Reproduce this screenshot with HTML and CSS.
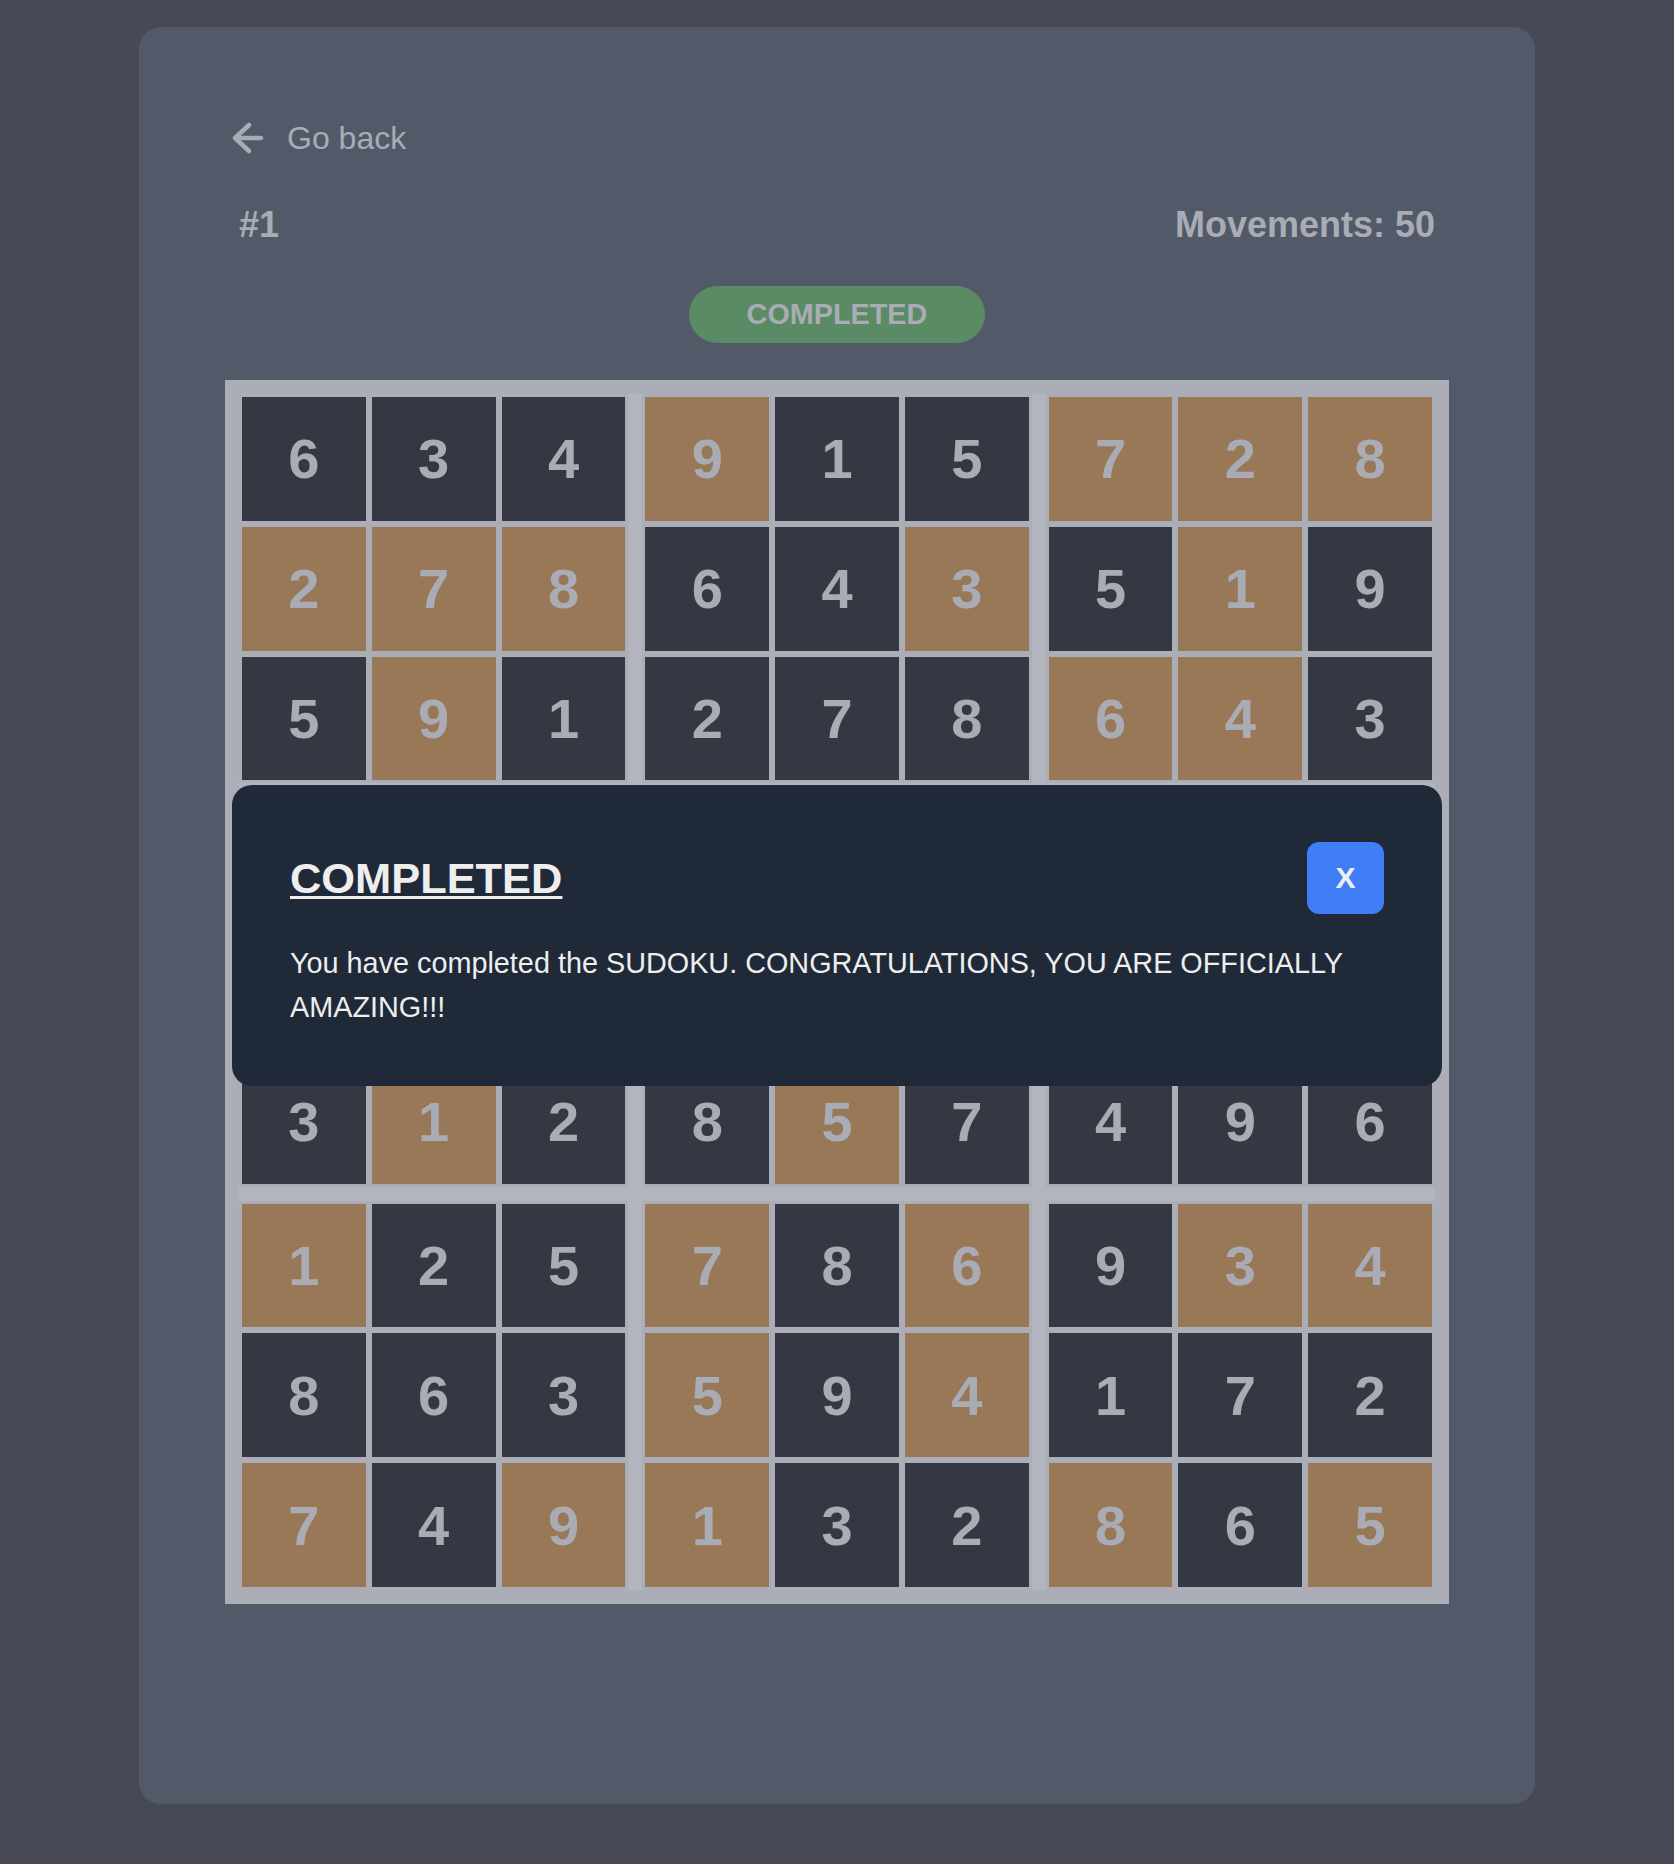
FILE: index.html
```html
<!DOCTYPE html>
<html lang="en">
<head>
<meta charset="utf-8">
<title>Sudoku #1</title>
<link rel="stylesheet" href="styles.css">
</head>
<body>
<main class="card">
  <a class="back" href="#">
    <svg class="back-icon" width="34" height="34" viewBox="0 0 34 34" aria-hidden="true">
      <path d="M18 4 L4 17 L18 30 M4 17 H30" fill="none" stroke="currentColor" stroke-width="4.5" stroke-linecap="round" stroke-linejoin="round"/>
    </svg>
    <span>Go back</span>
  </a>

  <div class="info">
    <span>#1</span>
    <span>Movements: 50</span>
  </div>

  <div class="status">
    <span class="pill">COMPLETED</span>
  </div>

  <div class="board" id="board"></div>

  <section class="modal">
    <div class="modal-head">
      <h2 class="modal-title">COMPLETED</h2>
      <button class="close">x</button>
    </div>
    <p class="modal-text">You have completed the SUDOKU. CONGRATULATIONS, YOU ARE OFFICIALLY AMAZING!!!</p>
  </section>
</main>
<script src="script.js"></script>
</body>
</html>
```

FILE: styles.css
```css
* { box-sizing: border-box; }

html, body {
  margin: 0;
  padding: 0;
}

body {
  background: #474a54;
  font-family: "Liberation Sans", Arial, sans-serif;
  color: #a9acb4;
  min-height: 1864px;
}

.card {
  position: relative;
  width: 1396px;
  margin: 27px auto 0;
  padding: 87px 86px 200px;
  background: #525a69;
  border-radius: 22px;
}

.back {
  display: flex;
  align-items: center;
  gap: 22px;
  height: 48px;
  padding-left: 6px;
  font-size: 32px;
  line-height: 48px;
  color: #a9acb4;
  text-decoration: none;
}

.back-icon {
  display: block;
  flex: none;
}

.info {
  display: flex;
  justify-content: space-between;
  margin-top: 36px;
  padding: 0 14px;
  font-size: 36px;
  font-weight: 700;
  line-height: 54px;
}

.status {
  margin-top: 34px;
  display: flex;
  justify-content: center;
}

.pill {
  display: inline-block;
  height: 57px;
  line-height: 57px;
  padding: 0 58px;
  border-radius: 999px;
  background: #5a8b64;
  font-size: 28.8px;
  font-weight: 700;
  color: #a9acb4;
}

.board {
  margin-top: 37px;
  width: 1224px;
  padding: 14px;
  background: #abaeb6;
  display: flex;
  flex-direction: column;
}

.band {
  display: flex;
}

.box {
  flex: 1;
  display: grid;
  grid-template-columns: repeat(3, 1fr);
}

.vsep {
  width: 14px;
  flex: none;
  background: #b2b5bd;
}

.hsep {
  height: 14px;
  background: #b2b5bd;
}

.cell {
  margin: 3px;
  aspect-ratio: 1 / 1;
  display: flex;
  align-items: center;
  justify-content: center;
  background: #353842;
  color: #a9acb4;
  font-size: 56px;
  font-weight: 700;
}

.cell.given {
  background: #987857;
}

.modal {
  position: absolute;
  left: 93px;
  top: 758px;
  width: 1210px;
  padding: 57px 58px;
  background: #202938;
  border-radius: 20px;
  color: #eeeeee;
}

.modal-head {
  display: flex;
  justify-content: space-between;
  align-items: center;
}

.modal-title {
  margin: 0;
  font-size: 43.4px;
  line-height: 44px;
  font-weight: 700;
  text-decoration: underline;
  text-decoration-thickness: 3px;
  text-underline-offset: 3px;
}

.close {
  width: 77px;
  height: 72px;
  border: none;
  border-radius: 12px;
  background: #3f7ef6;
  color: #eeeeee;
  font-family: "Liberation Sans", Arial, sans-serif;
  font-size: 30px;
  font-weight: 700;
  text-transform: uppercase;
  padding: 0;
}

.modal-text {
  margin: 27px 0 0;
  font-size: 28.8px;
  line-height: 44px;
}
```

FILE: script.js
```js
const rows = [
  "634915728",
  "278643519",
  "591278643",
  "         ",
  "         ",
  "312857496",
  "125786934",
  "863594172",
  "749132865"
];
const given = [
  "000100111",
  "111001010",
  "010000110",
  "101010001",
  "010100100",
  "010010000",
  "100101011",
  "000101000",
  "101100101"
];
const board = document.getElementById("board");
for (let br = 0; br < 3; br++) {
  if (br > 0) {
    const h = document.createElement("div");
    h.className = "hsep";
    board.appendChild(h);
  }
  const band = document.createElement("div");
  band.className = "band";
  for (let bc = 0; bc < 3; bc++) {
    if (bc > 0) {
      const v = document.createElement("div");
      v.className = "vsep";
      band.appendChild(v);
    }
    const box = document.createElement("div");
    box.className = "box";
    for (let r = 0; r < 3; r++) {
      for (let c = 0; c < 3; c++) {
        const R = br * 3 + r, C = bc * 3 + c;
        const cell = document.createElement("div");
        cell.className = "cell" + (given[R][C] === "1" ? " given" : "");
        const ch = rows[R][C];
        if (ch.trim()) cell.textContent = ch;
        box.appendChild(cell);
      }
    }
    band.appendChild(box);
  }
  board.appendChild(band);
}
```
